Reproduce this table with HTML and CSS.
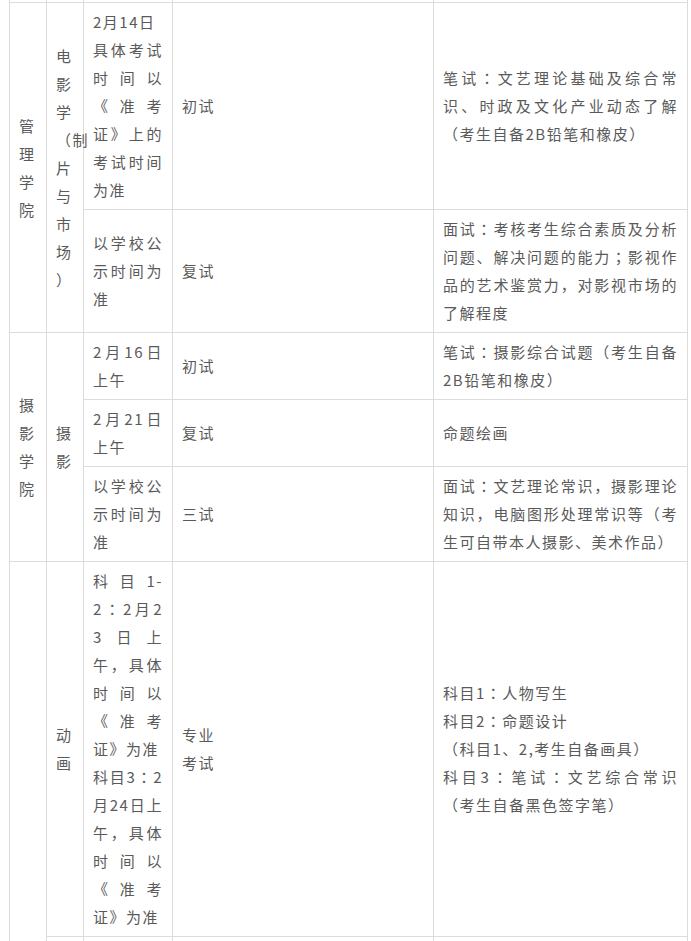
FILE: index.html
```html
<!DOCTYPE html>
<html lang="zh-CN">
<head>
<meta charset="utf-8">
<title>考试安排</title>
<link rel="stylesheet" href="styles.css">
</head>
<body>
<div class="page">
<table class="exam">
<colgroup>
<col class="c-college">
<col class="c-major">
<col class="c-time">
<col class="c-type">
<col class="c-content">
</colgroup>
<tbody>
<tr class="prev"><td></td><td></td><td></td><td></td><td></td></tr>
<tr>
<td rowspan="2">管理学院</td>
<td rowspan="2">电影学<span class="nw">（制</span>片与市场<br>）</td>
<td>2月14日<br>具体考试时间以《准考证》上的考试时间为准</td>
<td>初试</td>
<td>笔试<span class="p" lang="ja">：</span>文艺理论基础及综合常识、时政及文化产业动态了解（考生自备2B铅笔和橡皮）</td>
</tr>
<tr>
<td>以学校公示时间为准</td>
<td>复试</td>
<td>面试<span class="p" lang="ja">：</span>考核考生综合素质及分析问题、解决问题的能力<span class="p" lang="ja">；</span>影视作品的艺术鉴赏力，对影视市场的了解程度</td>
</tr>
<tr>
<td rowspan="3">摄影学院</td>
<td rowspan="3">摄影</td>
<td>2月16日上午</td>
<td>初试</td>
<td>笔试<span class="p" lang="ja">：</span>摄影综合试题（考生自备2B铅笔和橡皮）</td>
</tr>
<tr>
<td>2月21日上午</td>
<td>复试</td>
<td>命题绘画</td>
</tr>
<tr>
<td>以学校公示时间为准</td>
<td>三试</td>
<td>面试<span class="p" lang="ja">：</span>文艺理论常识，摄影理论知识，电脑图形处理常识等（考生可自带本人摄影、美术作品）</td>
</tr>
<tr>
<td rowspan="2"></td>
<td>动画</td>
<td>科目1-2<span class="p" lang="ja">：</span>2月23日上午，具体时间以《准考证》为准<br>科目3<span class="p" lang="ja">：</span>2月24日上午，具体时间以《准考证》为准</td>
<td>专业<br>考试</td>
<td>科目1<span class="p" lang="ja">：</span>人物写生<br>科目2<span class="p" lang="ja">：</span>命题设计<br>（科目1、2,考生自备画具）<br>科目3<span class="p" lang="ja">：</span>笔试<span class="p" lang="ja">：</span>文艺综合常识（考生自备黑色签字笔）</td>
</tr>
<tr class="more"><td></td><td></td><td></td><td></td></tr>
</tbody>
</table>
</div>
</body>
</html>
```

FILE: styles.css
```css
html, body {
  margin: 0;
  padding: 0;
  background: #ffffff;
}

.page {
  padding-left: 9px;
  overflow: hidden;
  height: 941px;
}

.exam {
  border-collapse: collapse;
  table-layout: fixed;
  width: 678px;
  margin-top: -29px;
  font-family: "Noto Sans CJK SC", "Microsoft YaHei", sans-serif;
  font-size: 15px;
  line-height: 28px;
  letter-spacing: 1.5px;
  color: #5a5a5a;
}

.c-college { width: 37px; }
.c-major { width: 37px; }
.c-time { width: 89px; }
.c-type { width: 261px; }
.c-content { width: 254px; }

.exam td {
  border: 1px solid #dcdcdc;
  padding: 5px 9px;
  vertical-align: middle;
  text-align: justify;
  word-break: break-all;
}

.exam .prev td {
  height: 20px;
}

.exam .more td {
  height: 300px;
}

.nw {
  white-space: nowrap;
}

.p {
  font-family: "Noto Sans CJK JP", "Noto Sans CJK SC", sans-serif;
}
```
